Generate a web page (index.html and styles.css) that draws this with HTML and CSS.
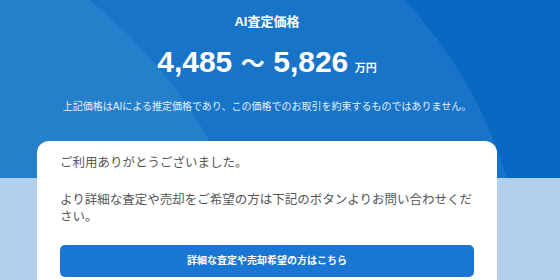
FILE: index.html
```html
<html>
  <head>
    <meta charset="utf-8">
    <link rel="stylesheet" href="styles.css">
  </head>
  <body>
    <div class="hero">
      <div class="glow-left"></div>
      <div class="glow-right"></div>
      <div class="hero-inner">
        <h1 class="label">AI査定価格</h1>
        <div class="price">
          <span class="num">4,485</span>
          <span class="tilde">〜</span>
          <span class="num">5,826</span>
          <span class="unit">万円</span>
        </div>
        <p class="note">上記価格はAIによる推定価格であり、この価格でのお取引を約束するものではありません。</p>
      </div>
    </div>
    <div class="wrap">
      <div class="card">
        <p>ご利用ありがとうございました。</p>
        <p>より詳細な査定や売却をご希望の方は下記のボタンよりお問い合わせください。</p>
        <a class="btn">詳細な査定や売却希望の方はこちら</a>
      </div>
    </div>
  </body>
</html>
```

FILE: styles.css
```css
body {
  margin: 0;
  background: #b2d0ec;
  font-family: "Liberation Sans", "Noto Sans CJK JP", sans-serif;
  overflow: hidden;
}

.hero {
  position: relative;
  height: 178px;
  background: #0a67c2;
  overflow: hidden;
  color: #fff;
}

/* two big soft circles behind the price */
.glow-right {
  position: absolute;
  left: -348px;
  top: -136px;
  width: 872px;
  height: 872px;
  border-radius: 50%;
  background: #1774c8;
}

.glow-left {
  position: absolute;
  left: -750px;
  top: -115px;
  width: 1030px;
  height: 1030px;
  border-radius: 50%;
  background: #2580cc;
  z-index: 1;
}

.hero-inner {
  position: relative;
  z-index: 2;
  padding: 13px 63px 0 37px;
  text-align: center;
}

.label {
  margin: 0;
  font-size: 13px;
  line-height: 18px;
  font-weight: bold;
}

.price {
  margin-top: 13px;
  font-weight: bold;
  line-height: 36px;
}

.price .num {
  font-size: 30px;
}

.price .tilde {
  font-size: 24px;
  margin: 0 4px;
}

.price .unit {
  font-size: 11px;
  margin-left: 2px;
}

.note {
  margin: 14px 0 0;
  font-size: 10px;
  line-height: 14px;
  color: #e4eef9;
  white-space: nowrap;
}

.wrap {
  position: relative;
  z-index: 3;
  margin-top: -37px;
  padding: 0 63px 0 37px;
}

.card {
  background: #fff;
  border-radius: 12px;
  padding: 14px 23px 20px;
  color: #555;
  font-size: 12.5px;
  line-height: 17px;
}

.card p {
  margin: 0 0 20px;
}

.card p + p {
  margin-bottom: 19px;
}

.btn {
  display: block;
  height: 32px;
  line-height: 32px;
  border-radius: 5px;
  background: #1976d2;
  color: #fff;
  text-align: center;
  font-size: 10px;
  font-weight: bold;
}
```
